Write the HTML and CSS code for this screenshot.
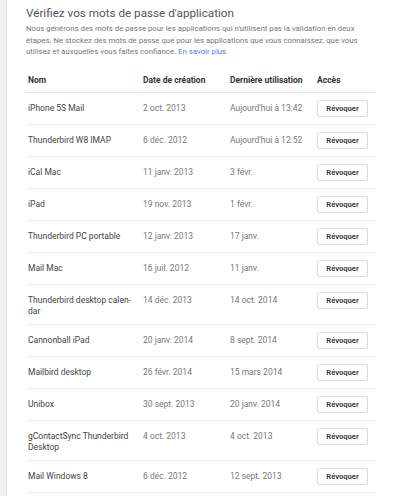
FILE: index.html
```html
<!DOCTYPE html>
<html lang="fr">
<head>
<meta charset="utf-8">
<title>Mots de passe d'application</title>
<link rel="stylesheet" href="styles.css">
</head>
<body>
<div class="card">
  <h1 class="title">Vérifiez vos mots de passe d'application</h1>
  <p class="desc">Nous générons des mots de passe pour les applications qui n'utilisent pas la validation en deux étapes. Ne stockez des mots de passe que pour les applications que vous connaissez, que vous utilisez et auxquelles vous faites confiance. <a class="link" href="#">En savoir plus</a></p>
  <table class="apps">
    <colgroup>
      <col class="c-name"><col class="c-date"><col class="c-date"><col class="c-act">
    </colgroup>
    <thead>
      <tr><th>Nom</th><th>Date de création</th><th>Dernière utilisation</th><th>Accès</th></tr>
    </thead>
    <tbody>
      <tr><td class="name">iPhone 5S Mail</td><td>2 oct. 2013</td><td>Aujourd'hui à 13:42</td><td class="act"><button class="btn">Révoquer</button></td></tr>
      <tr><td class="name">Thunderbird W8 IMAP</td><td>6 déc. 2012</td><td>Aujourd'hui à 12:52</td><td class="act"><button class="btn">Révoquer</button></td></tr>
      <tr><td class="name">iCal Mac</td><td>11 janv. 2013</td><td>3 févr.</td><td class="act"><button class="btn">Révoquer</button></td></tr>
      <tr><td class="name">iPad</td><td>19 nov. 2013</td><td>1 févr.</td><td class="act"><button class="btn">Révoquer</button></td></tr>
      <tr><td class="name">Thunderbird PC portable</td><td>12 janv. 2013</td><td>17 janv.</td><td class="act"><button class="btn">Révoquer</button></td></tr>
      <tr><td class="name">Mail Mac</td><td>16 juil. 2012</td><td>11 janv.</td><td class="act"><button class="btn">Révoquer</button></td></tr>
      <tr><td class="name">Thunderbird desktop calen-<br>dar</td><td>14 déc. 2013</td><td>14 oct. 2014</td><td class="act"><button class="btn">Révoquer</button></td></tr>
      <tr><td class="name">Cannonball iPad</td><td>20 janv. 2014</td><td>8 sept. 2014</td><td class="act"><button class="btn">Révoquer</button></td></tr>
      <tr><td class="name">Mailbird desktop</td><td>26 févr. 2014</td><td>15 mars 2014</td><td class="act"><button class="btn">Révoquer</button></td></tr>
      <tr><td class="name">Unibox</td><td>30 sept. 2013</td><td>20 janv. 2014</td><td class="act"><button class="btn">Révoquer</button></td></tr>
      <tr><td class="name">gContactSync Thunderbird Desktop</td><td>4 oct. 2013</td><td>4 oct. 2013</td><td class="act"><button class="btn">Révoquer</button></td></tr>
      <tr><td class="name">Mail Windows 8</td><td>6 déc. 2012</td><td>12 sept. 2013</td><td class="act"><button class="btn">Révoquer</button></td></tr>
    </tbody>
  </table>
</div>
</body>
</html>
```
FILE: styles.css
```css
html, body {
  margin: 0;
  padding: 0;
  background: #f1f1f1;
  font-family: Roboto, "Liberation Sans", Arial, sans-serif;
}
.card {
  margin-left: 6px;
  width: 368px;
  min-height: 496px;
  background: #fff;
  border-left: 1px solid #e3e3e3;
  border-right: 1px solid #e3e3e3;
  padding: 6px 17px 0 19px;
  box-sizing: content-box;
}
.title {
  margin: 0;
  font-size: 11.7px;
  line-height: 14px;
  font-weight: 400;
  color: #555;
}
.desc {
  margin: 3px 0 0;
  max-width: 336px;
  font-size: 7.8px;
  line-height: 11.7px;
  color: #777;
}
.link {
  color: #427fed;
  text-decoration: none;
}
.apps {
  margin-top: 7px;
  width: 349px;
  border-collapse: collapse;
  table-layout: fixed;
  font-size: 8.5px;
  line-height: 11px;
}
.c-name { width: 115px; }
.c-date { width: 87px; }
.c-act { width: 60px; }
.apps th {
  text-align: left;
  font-weight: 700;
  color: #333;
  padding: 10px 2px 6px;
  border-bottom: 1px solid #e5e5e5;
  vertical-align: top;
}
.apps td {
  padding: 10px 2px 7px;
  color: #777;
  vertical-align: top;
  border-bottom: 1px solid #ececec;
}
.apps td.name {
  color: #444;
}
.apps td.act {
  padding: 7px 2px;
}
.btn {
  display: block;
  width: 51px;
  height: 17px;
  margin: 0;
  padding: 0;
  background: #fff;
  border: 1px solid #dadada;
  border-radius: 2px;
  font-family: Roboto, "Liberation Sans", Arial, sans-serif;
  font-size: 7.6px;
  font-weight: 700;
  color: #444;
  line-height: 15px;
  text-align: center;
}
```
